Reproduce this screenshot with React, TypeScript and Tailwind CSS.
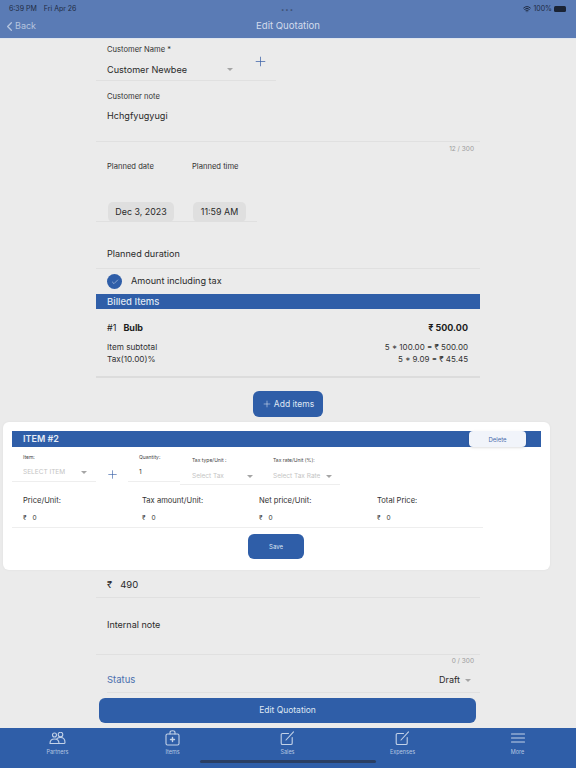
import { Check, ChevronLeft, Plus, Wifi } from "lucide-react";

function Caret({ className = "" }: { className?: string }) {
  return <span className={`inline-block w-0 h-0 border-x-[3px] border-x-transparent border-t-[3px] ${className}`} />;
}

function MoneyField({ label }: { label: string }) {
  return (
    <div>
      <p className="pt-[11px] text-[7.6px] leading-[10px] text-[#333]">{label}</p>
      <p className="mt-[7px] flex gap-[6px] text-[6.5px] leading-[10px] text-[#333]">
        <span>₹</span>
        <span>0</span>
      </p>
    </div>
  );
}

function Tab({ label, icon }: { label: string; icon: React.ReactNode }) {
  return (
    <div className="flex w-[115px] flex-col items-center pt-[1px]">
      <div className="flex h-[18px] items-center justify-center">{icon}</div>
      <span className="mt-[1px] text-[5.5px] leading-[8px] text-[#b4c6e2]">{label}</span>
    </div>
  );
}

const iconStroke = { fill: "none", stroke: "#c3d2e8", strokeWidth: 1.1, strokeLinecap: "round" as const, strokeLinejoin: "round" as const };

export default function App() {
  return (
    <div className="relative flex h-[768px] w-[576px] flex-col overflow-hidden bg-[#ebebeb] font-['Inter',sans-serif]">
      {/* Status bar and nav */}
      <header className="h-[39px] shrink-0 border-b border-[#dfe5ee] bg-[#5a7bb5]">
        <div className="flex h-[16px] items-center justify-between pl-[9px] pr-[10px] pt-[2px] text-[7px] text-[#1f2c44]">
          <div className="flex w-[120px] gap-[7px]">
            <span>6:39 PM</span>
            <span>Fri Apr 26</span>
          </div>
          <span className="text-[6px] tracking-[1px] text-[#3d4f70]">•••</span>
          <div className="flex w-[120px] items-center justify-end gap-[2px]">
            <Wifi size={8} strokeWidth={3} className="text-[#1f2c44]" />
            <span>100%</span>
            <span className="h-[6px] w-[12px] rounded-[1.5px] bg-[#1a2334]" />
          </div>
        </div>
        <div className="relative flex h-[20px] items-center justify-center">
          <div className="absolute left-[2px] flex items-center text-[#b6c5df]">
            <ChevronLeft size={15} strokeWidth={2} />
            <span className="-ml-[2px] text-[9px]">Back</span>
          </div>
          <span className="text-[9.6px] text-[#d3dcec]">Edit Quotation</span>
        </div>
      </header>

      <main className="ml-[96px] w-[384px] flex-1">
        {/* Customer */}
        <div className="flex h-[42px] w-[180px] border-b border-[#e0e0e0]">
          <div className="w-[148px] pl-[11px]">
            <p className="pt-[6px] text-[7.6px] leading-[10px] text-[#333]">Customer Name *</p>
            <div className="mt-[7px] flex items-center justify-between pr-[11px] text-[9.1px] leading-[15px] text-[#2a2a2a]">
              <span>Customer Newbee</span>
              <Caret className="border-t-[#a5a5a5]" />
            </div>
          </div>
          <div className="flex flex-1 justify-center pt-[15px]">
            <Plus size={15} strokeWidth={1.2} className="text-[#3d63a8]" />
          </div>
        </div>

        <div className="h-[61px] border-b border-[#e0e0e0] pl-[11px]">
          <p className="pt-[11px] text-[7.6px] leading-[10px] text-[#333]">Customer note</p>
          <p className="mt-[6px] text-[9.1px] leading-[15px] text-[#2a2a2a]">Hchgfyugyugi</p>
        </div>
        <p className="h-[12px] pr-[6px] pt-[2px] text-right text-[6.5px] leading-[10px] text-[#9a9a9a]">12 / 300</p>

        {/* Planned date and time */}
        <div className="h-[68px] w-[161px] border-b border-[#e0e0e0]">
          <div className="flex pl-[11px] pt-[8px] text-[7.6px] leading-[10px] text-[#333]">
            <span className="w-[85px]">Planned date</span>
            <span>Planned time</span>
          </div>
          <div className="mt-[30px] flex gap-[19px] pl-[12px] text-[8.9px] text-[#2a2a2a]">
            <span className="flex h-[20px] w-[66px] items-center justify-center rounded-[5px] bg-[#dfdfdf]">Dec 3, 2023</span>
            <span className="flex h-[20px] w-[53px] items-center justify-center rounded-[5px] bg-[#dfdfdf]">11:59 AM</span>
          </div>
        </div>

        <div className="h-[47px] border-b border-[#e0e0e0] pl-[11px] pt-[25px] text-[9.1px] leading-[14px] text-[#2a2a2a]">
          Planned duration
        </div>

        <div className="flex h-[25px] items-center gap-[9px] pl-[11px]">
          <span className="flex h-[15px] w-[15px] items-center justify-center rounded-full bg-[#2f5ea8]">
            <Check size={8} strokeWidth={1.5} className="text-[#dfe7f3]" />
          </span>
          <span className="pb-[1px] text-[9.1px] text-[#2a2a2a]">Amount including tax</span>
        </div>

        <div className="flex h-[15px] items-center bg-[#2f5ea8] pl-[11px] pt-[1px] text-[9.5px] font-medium text-[#dfe7f3]">Billed Items</div>

        {/* Billed item */}
        <div className="h-[69px] border-b-2 border-[#dcdcdc] pl-[11px] pr-[12px] pt-[12px]">
          <div className="flex justify-between text-[9px] leading-[14px] text-[#1c1c1c]">
            <span className="flex gap-[7px]">
              <span>#1</span>
              <b className="font-bold">Bulb</b>
            </span>
            <b className="font-bold">₹ 500.00</b>
          </div>
          <div className="mt-[6px] flex justify-between text-[8.2px] leading-[12px] text-[#333]">
            <span>Item subtotal</span>
            <span className="text-[8px]">5 * 100.00 = ₹ 500.00</span>
          </div>
          <div className="flex justify-between text-[8.2px] leading-[12px] text-[#333]">
            <span>Tax(10.00)%</span>
            <span className="text-[8px]">5 * 9.09 = ₹ 45.45</span>
          </div>
        </div>

        <button className="mx-auto mt-[13px] flex h-[26px] w-[70px] items-center justify-center gap-[2px] rounded-[6px] bg-[#2f5ea8] text-[8.5px] text-[#dfe7f3]">
          <Plus size={10} strokeWidth={1.3} />
          Add items
        </button>

        {/* Item #2 card */}
        <section className="ml-[-93px] mt-[5px] h-[148px] w-[547px] rounded-[6px] bg-white pt-[9px] shadow-[0_0_3px_rgba(0,0,0,0.05)]">
          <div className="mx-[9px] flex h-[16px] items-center bg-[#2f5ea8] pl-[11px]">
            <span className="text-[9px] font-semibold text-[#e6ecf6]">ITEM #2</span>
            <span className="ml-auto mr-[15px] flex h-[16px] w-[57px] items-center justify-center rounded-[4px] bg-[#f1f4fa] text-[6px] text-[#4a6cab] shadow-sm">
              Delete
            </span>
          </div>

          <div className="ml-[9px] flex h-[38px] items-start">
            <div className="h-[35px] w-[84px] border-b border-[#eeeeee] pl-[11px]">
              <p className="pt-[7px] text-[5px] leading-[6px] text-[#444]">Item:</p>
              <div className="mt-[9px] flex items-center justify-between pr-[9px] text-[6.5px] leading-[6px] text-[#c4c4c4]">
                <span>SELECT ITEM</span>
                <Caret className="border-t-[#a5a5a5]" />
              </div>
            </div>
            <div className="flex w-[32px] justify-center pt-[21px]">
              <Plus size={13} strokeWidth={1.2} className="text-[#3d63a8]" />
            </div>
            <div className="h-[35px] w-[52px] border-b border-[#eeeeee] pl-[11px]">
              <p className="pt-[7px] text-[5px] leading-[6px] text-[#444]">Quantity:</p>
              <p className="mt-[9px] text-[6.5px] leading-[6px] text-[#333]">1</p>
            </div>
            <div className="h-[38px] w-[80px] border-b border-[#eeeeee] pl-[12px]">
              <p className="pt-[10px] text-[5px] leading-[6px] text-[#444]">Tax type/Unit :</p>
              <div className="mt-[10px] flex items-center justify-between pr-[7px] text-[6.5px] leading-[6px] text-[#c4c4c4]">
                <span>Select Tax</span>
                <Caret className="border-t-[#a5a5a5]" />
              </div>
            </div>
            <div className="h-[38px] w-[80px] border-b border-[#eeeeee] pl-[13px]">
              <p className="pt-[10px] text-[5px] leading-[6px] text-[#444]">Tax rate/Unit (%):</p>
              <div className="mt-[10px] flex items-center justify-between pr-[8px] text-[6.5px] leading-[6px] text-[#c4c4c4]">
                <span>Select Tax Rate</span>
                <Caret className="border-t-[#a5a5a5]" />
              </div>
            </div>
          </div>

          <div className="ml-[9px] grid h-[43px] w-[471px] grid-cols-[119px_117px_118px_1fr] border-b border-[#eeeeee] pl-[11px]">
            <MoneyField label="Price/Unit:" />
            <MoneyField label="Tax amount/Unit:" />
            <MoneyField label="Net price/Unit:" />
            <MoneyField label="Total Price:" />
          </div>

          <button className="ml-[245px] mt-[6px] flex h-[25px] w-[56px] items-center justify-center rounded-[6px] bg-[#2f5ea8] text-[6px] text-[#dfe7f3]">
            Save
          </button>
        </section>

        <div className="flex h-[28px] gap-[8px] border-b border-[#e0e0e0] pl-[11px] pt-[8px] text-[9.5px] leading-[14px] text-[#2a2a2a]">
          <span>₹</span>
          <span>490</span>
        </div>

        <div className="h-[57px] border-b border-[#e0e0e0] pl-[11px] pt-[20px] text-[9px] leading-[14px] text-[#2a2a2a]">
          Internal note
        </div>
        <p className="h-[13px] pr-[6px] pt-[1px] text-right text-[6.5px] leading-[10px] text-[#9a9a9a]">0 / 300</p>

        <div className="ml-[11px] flex h-[25px] items-center justify-between border-b border-[#e0e0e0] pr-[9px]">
          <span className="text-[9.5px] text-[#4a6fae]">Status</span>
          <span className="flex items-center gap-[5px] text-[9px] text-[#2a2a2a]">
            Draft
            <Caret className="border-t-[#a5a5a5]" />
          </span>
        </div>

        <button className="ml-[3px] mt-[5px] flex h-[25px] w-[377px] items-center justify-center rounded-[6px] bg-[#2f5ea8] text-[8.5px] text-[#dfe7f3]">
          Edit Quotation
        </button>
      </main>

      {/* Tab bar */}
      <nav className="flex h-[40px] shrink-0 bg-[#2f5ea8]">
        <Tab
          label="Partners"
          icon={
            <svg width="17" height="13" viewBox="0 0 17 13" {...iconStroke}>
              <circle cx="5.5" cy="3" r="2" />
              <circle cx="11.5" cy="2.6" r="2.3" />
              <path d="M1 11.5c0-3 2-4.5 4.5-4.5s4.5 1.500 4.500 4.500z" />
              <path d="M8 6.500c1-.8 2.200-1 3.500-1 2.800 0 4.500 2 4.500 5 0 .7-.4 1-1 1h-5" />
            </svg>
          }
        />
        <Tab
          label="Items"
          icon={
            <svg width="15" height="16" viewBox="0 0 15 16" {...iconStroke}>
              <rect x="1" y="4" width="13" height="11" rx="1.500" />
              <path d="M5 4V2.500C5 1.500 6 .8 7.500 .8S10 1.500 10 2.500V4" />
              <path d="M7.500 7.500v4M5.500 9.500h4" strokeWidth="1.400" />
            </svg>
          }
        />
        <Tab
          label="Sales"
          icon={
            <svg width="15" height="15" viewBox="0 0 15 15" {...iconStroke}>
              <path d="M8.500 2.500H2.500a1.300 1.300 0 0 0-1.300 1.300v8.400a1.300 1.300 0 0 0 1.300 1.300h8.400a1.300 1.300 0 0 0 1.300-1.300V6.500" />
              <path d="M6 9 13.500 .8" />
            </svg>
          }
        />
        <Tab
          label="Expenses"
          icon={
            <svg width="15" height="15" viewBox="0 0 15 15" {...iconStroke}>
              <path d="M8.500 2.500H2.500a1.300 1.300 0 0 0-1.300 1.300v8.400a1.300 1.300 0 0 0 1.300 1.300h8.400a1.300 1.300 0 0 0 1.300-1.300V6.500" />
              <path d="M6 9 13.500 .8" />
            </svg>
          }
        />
        <Tab
          label="More"
          icon={
            <svg width="14" height="10" viewBox="0 0 14 10" {...iconStroke}>
              <path d="M.5 1h13M.5 5h13M.5 9h13" />
            </svg>
          }
        />
      </nav>
      {/* Home indicator */}
      <span className="absolute bottom-[5px] left-[200px] h-[3px] w-[176px] rounded-full bg-[#2b3f63]" />
    </div>
  );
}
